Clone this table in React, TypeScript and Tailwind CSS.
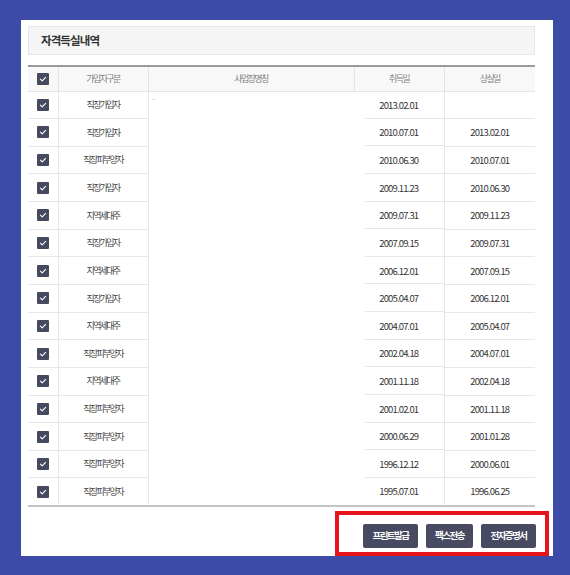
import React from 'react';

type Row = { type: string; from: string; to: string };

const ROWS: Row[] = [
  { type: '직장가입자', from: '2013.02.01', to: '' },
  { type: '직장가입자', from: '2010.07.01', to: '2013.02.01' },
  { type: '직장피부양자', from: '2010.06.30', to: '2010.07.01' },
  { type: '직장가입자', from: '2009.11.23', to: '2010.06.30' },
  { type: '지역세대주', from: '2009.07.31', to: '2009.11.23' },
  { type: '직장가입자', from: '2007.09.15', to: '2009.07.31' },
  { type: '지역세대주', from: '2006.12.01', to: '2007.09.15' },
  { type: '직장가입자', from: '2005.04.07', to: '2006.12.01' },
  { type: '지역세대주', from: '2004.07.01', to: '2005.04.07' },
  { type: '직장피부양자', from: '2002.04.18', to: '2004.07.01' },
  { type: '지역세대주', from: '2001.11.18', to: '2002.04.18' },
  { type: '직장피부양자', from: '2001.02.01', to: '2001.11.18' },
  { type: '직장피부양자', from: '2000.06.29', to: '2001.01.28' },
  { type: '직장피부양자', from: '1996.12.12', to: '2000.06.01' },
  { type: '직장피부양자', from: '1995.07.01', to: '1996.06.25' },
];

const FONT = "font-['Noto_Sans_CJK_KR','Noto_Sans',sans-serif]";

function Check() {
  return (
    <span className="mx-auto flex h-[12px] w-[12px] items-center justify-center rounded-[1px] bg-[#464a5f]">
      <svg viewBox="0 0 12 12" className="h-[12px] w-[12px]">
        <path d="M3.4 6.2 L5.2 7.9 L8.6 4.3" fill="none" stroke="#ffffff" strokeWidth="1.1" strokeLinecap="round" strokeLinejoin="round" />
      </svg>
    </span>
  );
}

export default function App() {
  const last = ROWS.length - 1;
  return (
    <div className={`h-[575px] w-[570px] bg-[#3b4ba6] pt-[20px] pl-[21px] ${FONT}`}>
      <div className="relative h-[536px] w-[532px] bg-white pt-[6px] pl-[7px]">
        {/* 제목 */}
        <div className="flex h-[29px] w-[507px] items-center border border-[#e6e6e6] bg-[#f5f5f5] pl-[12px]">
          <span className="text-[11.5px] font-bold tracking-[-0.9px] text-[#333]">자격득실내역</span>
        </div>

        <table className="mt-[10px] w-[507px] table-fixed border-t-2 border-b-2 border-t-[#9a9a9a] border-b-[#c4c4c4]">
          <colgroup>
            <col className="w-[30px]" />
            <col className="w-[90px]" />
            <col className="w-[206px]" />
            <col className="w-[90px]" />
            <col className="w-[91px]" />
          </colgroup>
          <thead>
            <tr className="h-[25px] bg-[#f8f8f9] text-[9px] tracking-[-1.6px] text-[#808080]">
              <th className="border-b border-[#e3e3e8] font-normal"><Check /></th>
              <th className="border-b border-l border-[#e3e3e8] font-normal">가입자구분</th>
              <th className="border-b border-l border-[#e3e3e8] font-normal">사업장명칭</th>
              <th className="border-b border-l border-[#e3e3e8] font-normal">취득일</th>
              <th className="border-b border-l border-[#e3e3e8] font-normal">상실일</th>
            </tr>
          </thead>
          <tbody>
            {ROWS.map((r, i) => (
              <tr key={i} className="h-[27.65px] text-center">
                <td className={i < last ? 'border-b border-[#e6e6ea]' : ''}><Check /></td>
                <td className={`border-l border-[#e6e6ea] text-[9px] tracking-[-1.7px] text-[#444] ${i < last ? 'border-b' : ''}`}>{r.type}</td>
                {i === 0 && (
                  <td rowSpan={ROWS.length} className="border-l border-[#e6e6ea] align-top">
                    <div className="pt-[1px] pl-[4px] text-left text-[7px] leading-[10px] text-[#999]">-</div>
                  </td>
                )}
                <td
                  className={`text-[9.5px] tracking-[-0.85px] text-[#333] ${
                    i < last
                      ? 'bg-[linear-gradient(#e6e6ea,#e6e6ea)] bg-[length:79px_1px] bg-[position:right_bottom] bg-no-repeat'
                      : ''
                  }`}
                >
                  {r.from}
                </td>
                <td className={`border-l border-[#e6e6ea] text-[9.5px] tracking-[-0.85px] text-[#333] ${i < last ? 'border-b' : ''}`}>{r.to}</td>
              </tr>
            ))}
          </tbody>
        </table>

        {/* 하단 버튼 */}
        <div className="mt-[17px] flex justify-end gap-[8px] pr-[17px]">
          {['프린트발급', '팩스전송', '전자증명서'].map((b) => (
            <button
              key={b}
              className={`h-[24px] rounded-[2px] bg-[#474a60] text-[9.5px] font-bold tracking-[-1.5px] text-white ${b === '팩스전송' ? 'w-[47px]' : 'w-[55px]'}`}
            >
              {b}
            </button>
          ))}
        </div>

        {/* 강조 표시 */}
        <div className="absolute top-[491px] left-[314px] h-[45px] w-[214px] border-4 border-[#e8141c]" />
      </div>
    </div>
  );
}
